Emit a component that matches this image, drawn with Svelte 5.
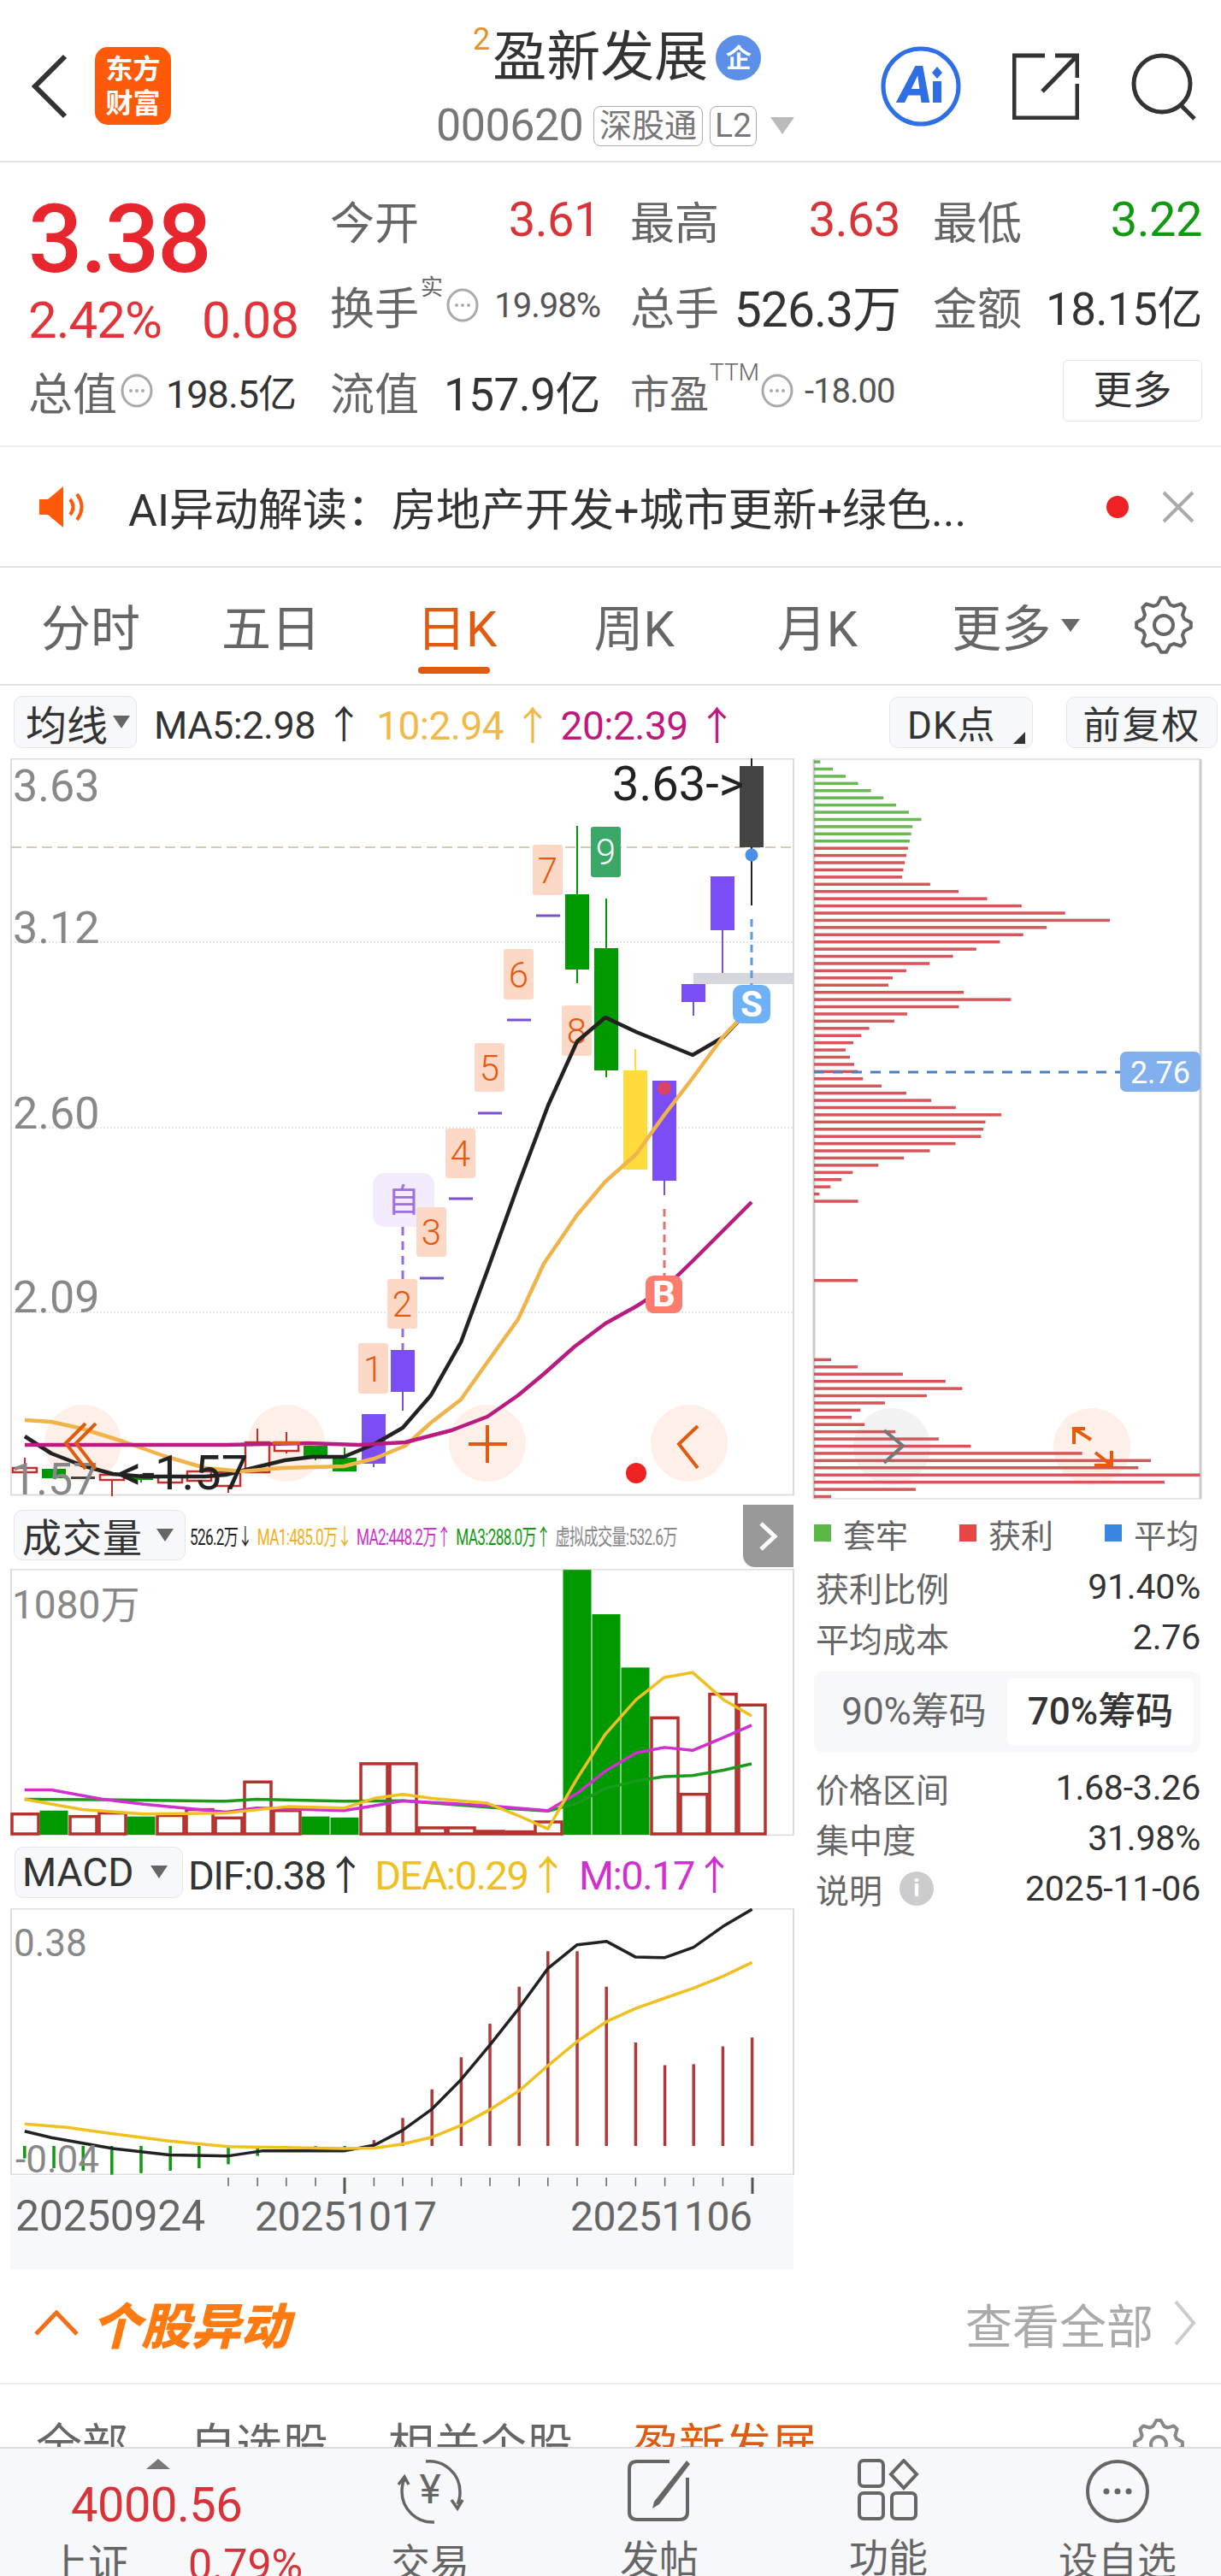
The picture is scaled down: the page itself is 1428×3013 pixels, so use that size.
<script>
  const X = 0.6;
  const z5 = (p) => p.map(([x, y]) => `${x * X},${1760 + y * 0.577}`).join(' ');

  const ma5 = '29,1680 60,1700 96,1714 132,1724 168,1727 204,1727 240,1727 264,1725 300,1716 333,1708 366,1704 402,1704 438,1689 471,1670 504,1632 539,1570 570,1486 606,1386 641,1293 675,1218 708,1190 744,1207 810,1234 846,1213 879,1178';
  const ma10 = '29,1661 60,1663 96,1671 144,1686 192,1703 240,1717 282,1721 330,1717 366,1716 402,1715 438,1706 474,1691 504,1664 539,1637 573,1589 606,1543 636,1478 675,1421 708,1382 744,1350 777,1304 810,1261 846,1212 879,1178';
  const ma20 = '29,1690 120,1690 264,1690 360,1688 420,1690 474,1687 528,1673 570,1657 606,1632 636,1607 672,1575 708,1548 744,1528 777,1507 810,1475 846,1439 879,1406';

  const candles = [
    { c: 879, t: 896, b: 991, wt: 887, wb: 1059, f: '#444', w: '#222' },
    { c: 845, t: 1025, b: 1088, wt: 1025, wb: 1138, f: '#7a4df5', w: '#7a4fd0' },
    { c: 811, t: 1151, b: 1172, wt: 1151, wb: 1188, f: '#7a4df5', w: '#7a4fd0' },
    { c: 777, t: 1264, b: 1381, wt: 1264, wb: 1398, f: '#7a4df5', w: '#7a4fd0' },
    { c: 743, t: 1252, b: 1368, wt: 1227, wb: 1368, f: '#ffdb3c', w: '#ffdb3c' },
    { c: 709, t: 1109, b: 1252, wt: 1051, wb: 1260, f: '#009900', w: '#009900' },
    { c: 675, t: 1046, b: 1134, wt: 966, wb: 1150, f: '#009900', w: '#009900' },
    { c: 471, t: 1579, b: 1628, wt: 1579, wb: 1650, f: '#7a4df5', w: '#7a4fd0' },
    { c: 437, t: 1654, b: 1712, wt: 1654, wb: 1716, f: '#7a4df5', w: '#7a4fd0' },
    { c: 403, t: 1705, b: 1721, wt: 1693, wb: 1721, f: '#009900', w: '#009900' },
    { c: 369, t: 1691, b: 1705, wt: 1691, wb: 1708, f: '#009900', w: '#009900' },
    { c: 63, t: 1718, b: 1729, wt: 1718, wb: 1729, f: '#009900', w: '#009900' },
    { c: 165, t: 1728, b: 1731, wt: 1724, wb: 1734, f: '#009900', w: '#009900' }
  ];
  const hollow = [
    { c: 335, t: 1687, b: 1697, wt: 1675, wb: 1700 },
    { c: 301, t: 1687, b: 1722, wt: 1671, wb: 1722 },
    { c: 267, t: 1722, b: 1738, wt: 1722, wb: 1746 },
    { c: 233, t: 1721, b: 1732, wt: 1721, wb: 1732 },
    { c: 199, t: 1727, b: 1734, wt: 1727, wb: 1742 },
    { c: 131, t: 1725, b: 1731, wt: 1725, wb: 1750 },
    { c: 29, t: 1717, b: 1722, wt: 1705, wb: 1722 }
  ];
  const tags = [
    { n: '1', x: 419, y: 1571, h: 59 },
    { n: '2', x: 453, y: 1496, h: 58 },
    { n: '4', x: 521, y: 1320, h: 58 },
    { n: '5', x: 555, y: 1220, h: 57 },
    { n: '6', x: 589, y: 1110, h: 59 },
    { n: '7', x: 623, y: 988, h: 59 },
    { n: '8', x: 657, y: 1176, h: 59 }
  ];
  const dashes = [[641, 1071], [607, 1193], [573, 1302], [539, 1402], [505, 1495]];

  const greens = [58, 102, 147, 191, 236, 280, 324, 369, 413, 382, 377, 372];
  const reds = [366, 360, 355, 350, 345, 444, 544, 644, 765, 918, 1075, 853, 771, 689, 606, 524, 442, 360, 312, 297, 562, 728, 545, 363, 318, 230, 202, 174, 147, 162, 177, 190, 208, 273, 360, 448, 534, 694, 638, 631, 623, 533, 443, 352, 262, 172, 133, 94, 55, 191];
  const lows = [96, 189, 348, 498, 557, 432, 285, 199, 168, 214, 322, 474, 587, 978, 1219, 1175, 1392, 1267, 393, 96];
  const rowY = (i) => 800 + 0.615 * (148 + 13.7 * i) - 1.7;
  const rowW = (x) => (x - 36) * 0.333;
  const bars = [
    ...greens.map((x, i) => ({ y: rowY(i), w: rowW(x), f: '#6ab853' })),
    ...reds.map((x, i) => ({ y: rowY(i + 12), w: rowW(x), f: '#d5555a' })),
    { y: rowY(72), w: rowW(189), f: '#d5555a' },
    ...lows.map((x, i) => ({ y: rowY(i + 83), w: rowW(x), f: '#d5555a' }))
  ];

  const centers = Array.from({ length: 26 }, (_, i) => 29 + i * 34);
  const vol = [
    [627, 0], [620, 1], [632, 0], [625, 0], [632, 1], [630, 0], [618, 0], [635, 0], [562, 0], [620, 0], [632, 1], [634, 1], [525, 0],
    [525, 0], [655, 0], [655, 0], [662, 0], [663, 0], [643, 0], [132, 1], [222, 1], [330, 1], [432, 0], [587, 0], [384, 0], [406, 0]
  ].map(([t, g], i) => ({ x: centers[i], y: 1760 + t * 0.577, g }));

  const volY = z5([[48, 597], [160, 618], [280, 627], [440, 625], [560, 612], [670, 615], [730, 595], [785, 587], [840, 595], [950, 605], [1010, 630], [1068, 657], [1125, 555], [1180, 465], [1240, 395], [1295, 350], [1350, 340], [1410, 395], [1465, 428]]);
  const volM = z5([[48, 578], [100, 578], [200, 597], [280, 607], [440, 623], [500, 615], [670, 620], [730, 610], [785, 600], [950, 610], [1068, 620], [1125, 585], [1180, 540], [1240, 503], [1295, 492], [1350, 498], [1410, 472], [1465, 447]]);
  const volG = z5([[48, 597], [200, 598], [440, 601], [500, 597], [670, 601], [785, 600], [950, 613], [1068, 621], [1125, 605], [1180, 575], [1240, 560], [1295, 551], [1350, 549], [1410, 538], [1465, 525]]);

  const macdUp = [[729, 1288], [785, 1243], [842, 1185], [899, 1120], [955, 1052], [1012, 977], [1068, 905], [1125, 905], [1182, 977], [1239, 1090], [1296, 1136], [1352, 1134], [1409, 1098], [1466, 1080]];
  const macdDown = [[48, 1325], [105, 1345], [162, 1350], [218, 1358], [275, 1355], [332, 1350], [388, 1345], [445, 1337], [502, 1320], [558, 1305], [615, 1303], [672, 1305]];
  const dif = z5([[48, 1270], [100, 1283], [220, 1305], [330, 1318], [445, 1320], [510, 1310], [670, 1310], [730, 1298], [785, 1268], [842, 1225], [899, 1165], [955, 1095], [1012, 1020], [1068, 940], [1125, 892], [1182, 885], [1239, 917], [1296, 918], [1352, 897], [1409, 855], [1466, 820]]);
  const dea = z5([[48, 1255], [130, 1262], [220, 1275], [330, 1290], [445, 1301], [670, 1305], [730, 1304], [785, 1296], [842, 1282], [899, 1258], [955, 1226], [1012, 1188], [1068, 1137], [1125, 1088], [1182, 1048], [1239, 1021], [1296, 1000], [1352, 980], [1409, 956], [1466, 928]]);
  const ticks = [445, 502, 558, 615, 729, 785, 842, 899, 955, 1012, 1068, 1125, 1182, 1239, 1296, 1352, 1409];

  const gear = (cx, cy, R, r, n) => {
    const pts = [];
    for (let i = 0; i < n * 4; i++) {
      const a = (i / (n * 4)) * Math.PI * 2 - Math.PI / 2 - Math.PI / (n * 4);
      const rad = i % 4 < 2 ? R : r;
      pts.push(`${(cx + rad * Math.cos(a)).toFixed(1)},${(cy + rad * Math.sin(a)).toFixed(1)}`);
    }
    return pts.join(' ');
  };
</script>

{#snippet more()}
  <svg class="more" viewBox="0 0 38 42" width="38" height="42">
    <ellipse cx="19" cy="21" rx="17" ry="18" fill="none" stroke="#aaa" stroke-width="3" />
    <circle cx="12" cy="21" r="2" fill="#aaa" /><circle cx="19" cy="21" r="2" fill="#aaa" /><circle cx="26" cy="21" r="2" fill="#aaa" />
  </svg>
{/snippet}

<div class="page">
  <header class="head">
    <div class="head-left">
      <svg width="44" height="76" viewBox="0 0 44 76"><path d="M40 3 5 38l35 35" fill="none" stroke="#333" stroke-width="6" /></svg>
      <div class="logo"><span>东方</span><span>财富</span></div>
    </div>
    <div class="head-mid">
      <div class="title"><sup>2</sup><b>盈新发展</b><i>企</i></div>
      <div class="sub"><span class="code">000620</span><em>深股通</em><em class="l2">L2</em><span class="tri"></span></div>
    </div>
    <div class="head-right">
      <svg width="96" height="96" viewBox="0 0 96 96">
        <circle cx="48" cy="48" r="44" fill="#fff" stroke="#2f6fe6" stroke-width="5" />
        <text class="ai" x="22" y="67">A</text><rect x="62" y="42" width="10" height="25" fill="#2f6fe6" />
        <path d="m67 25 6 7-6 7-6-7z" fill="#2f6fe6" />
      </svg>
      <svg width="78" height="78" viewBox="0 0 78 78"><path d="M76 36v40H2V3h36M35 45 74 5M50 3h26v26" fill="none" stroke="#333" stroke-width="5" /></svg>
      <svg width="80" height="80" viewBox="0 0 80 80"><circle cx="38" cy="37" r="33" fill="none" stroke="#333" stroke-width="5" /><path d="m60 62 16 16" stroke="#333" stroke-width="5" /></svg>
    </div>
  </header>

  <section class="quote">
    <div class="big">3.38</div>
    <div class="cell"><span class="k">今开</span><span class="v up">3.61</span></div>
    <div class="cell"><span class="k">最高</span><span class="v up">3.63</span></div>
    <div class="cell last"><span class="k">最低</span><span class="v down">3.22</span></div>

    <div class="chg"><span>2.42%</span><span>0.08</span></div>
    <div class="cell"><span class="k">换手</span><span class="s">实</span>{@render more()}<span class="v small">19.98%</span></div>
    <div class="cell"><span class="k">总手</span><span class="v dark wide">526.3万</span></div>
    <div class="cell last"><span class="k">金额</span><span class="v dark">18.15亿</span></div>

    <div class="cell first"><span class="k">总值</span>{@render more()}<span class="v mid">198.5亿</span></div>
    <div class="cell"><span class="k">流值</span><span class="v dark">157.9亿</span></div>
    <div class="cell left"><span class="k k2">市盈</span><span class="s ttm">TTM</span>{@render more()}<span class="v small dark">-18.00</span></div>
    <div class="cell last end"><span class="btn-more">更多</span></div>
  </section>

  <section class="notice">
    <svg width="58" height="50" viewBox="0 0 58 50">
      <path d="M1 16h10L29 1v48L11 34H1z" fill="#ff5a0a" /><path d="M37 16q7 9 0 18M45 10q11 15 0 30" fill="none" stroke="#ff5a0a" stroke-width="4" />
    </svg>
    <span class="notice-t">AI异动解读：房地产开发+城市更新+绿色...</span>
    <span class="dot"></span>
    <svg width="38" height="38" viewBox="0 0 38 38"><path d="m2 2 34 34M36 2 2 36" stroke="#aaa" stroke-width="4" /></svg>
  </section>

  <nav class="tabs">
    <span class="t1">分时</span><span class="t2">五日</span><span class="t3 on">日K</span><span class="t4">周K</span><span class="t5">月K</span>
    <span class="t6">更多<i></i></span>
    <svg width="70" height="70" viewBox="0 0 70 70"><polygon points={gear(35, 35, 32, 25, 8)} fill="none" stroke="#666" stroke-width="4" stroke-linejoin="round" /><circle cx="35" cy="35" r="11" fill="none" stroke="#666" stroke-width="4" /></svg>
  </nav>

  <div class="board">
    <div class="charts">
      <div class="tool">
        <span class="pick p1">均线<i></i></span>
        <span class="ma">MA5:2.98 ↑</span><span class="ma c1">10:2.94 ↑</span><span class="ma c2">20:2.39 ↑</span>
      </div>

      <svg class="kline" viewBox="0 887 940 868" width="940" height="868">
        <rect x="13" y="887.500" width="915" height="861" fill="#fff" stroke="#ddd" stroke-width="2" />
        <line x1="13" x2="925" y1="991" y2="991" stroke="#d3cbb4" stroke-width="2" stroke-dasharray="12 6" />
        {#each [1102, 1319, 1535] as y}<line x1="13" x2="928" y1={y} y2={y} stroke="#e0e0e0" stroke-width="1.500" stroke-dasharray="2 2" />{/each}
        <text class="axis" x="15" y="937">3.63</text>
        <text class="axis" x="15" y="1103">3.12</text>
        <text class="axis" x="15" y="1320">2.60</text>
        <text class="axis" x="15" y="1535">2.09</text>
        <rect x="811" y="1138" width="117" height="13" fill="#d5d7dc" />

        {#each [97, 335, 570, 806] as cx}<circle {cx} cy="1688" r="45" fill="#fef0e8" />{/each}

        {#each candles as k}
          <line x1={k.c} x2={k.c} y1={k.wt} y2={k.wb} stroke={k.w} stroke-width="2" />
          <rect x={k.c - 14} y={k.t} width="28" height={k.b - k.t} fill={k.f} />
        {/each}
        {#each hollow as k}
          <line x1={k.c} x2={k.c} y1={k.wt} y2={k.wb} stroke="#c0302e" stroke-width="2" />
          <rect x={k.c - 14} y={k.t} width="28" height={k.b - k.t} fill="#fff" stroke="#c0302e" stroke-width="2.500" />
        {/each}
        <rect x="83" y="1727" width="28" height="3" fill="#444" />
        {#each dashes as d}<line x1={d[0] - 14} x2={d[0] + 14} y1={d[1]} y2={d[1]} stroke="#7a4fd0" stroke-width="3" />{/each}

        <line x1="471" x2="471" y1="1435" y2="1579" stroke="#9a6be0" stroke-width="3" stroke-dasharray="10 7" />
        <line x1="777" x2="777" y1="1414" y2="1492" stroke="#d9756a" stroke-width="3" stroke-dasharray="9 6" />
        <line x1="879" x2="879" y1="1075" y2="1152" stroke="#5a9be8" stroke-width="3" stroke-dasharray="9 6" />
        <circle cx="879" cy="1000" r="7.500" fill="#4a8fe8" />
        <circle cx="777" cy="1273" r="8" fill="#d9436a" />

        {#each tags as g}
          <rect x={g.x} y={g.y} width="35" height={g.h} rx="3" fill="#fcd9c6" />
          <text class="tagn" x={g.x + 17.500} y={g.y + g.h / 2 + 15}>{g.n}</text>
        {/each}
        <rect x="691" y="967" width="35" height="59" rx="3" fill="#3aa866" />
        <text class="tagn w" x="708.500" y="1011">9</text>

        <rect x="436" y="1372" width="72" height="63" rx="14" fill="#f3ecfd" />
        <text class="zi" x="472" y="1417">自</text>
        <rect x="487" y="1412" width="35" height="58" rx="3" fill="#fcd9c6" />
        <text class="tagn" x="504.500" y="1456">3</text>

        <polyline class="ln" points={ma5} stroke="#222" />
        <polyline class="ln" points={ma10} stroke="#f0b44a" />
        <polyline class="ln" points={ma20} stroke="#b81c80" />

        <rect x="755" y="1492" width="43" height="44" rx="9" fill="#ff7b6b" />
        <text class="bs" x="776.500" y="1528">B</text>
        <rect x="857" y="1152" width="44" height="45" rx="10" fill="#6fb1f7" />
        <text class="bs" x="879" y="1189">S</text>

        <text class="axis" x="13" y="1748">1.57</text>
        <text class="mark" x="716" y="936">3.63-&gt;</text>
        <text class="mark" x="137" y="1742">&lt;-1.57</text>

        <path d="M112 1665 89 1688l23 30M100 1665 77 1688l23 30" fill="none" stroke="#e05a10" stroke-width="4" />
        <path d="M319 1688h32" stroke="#e05a10" stroke-width="4" />
        <path d="M548 1689h45M570 1667v44" stroke="#e05a10" stroke-width="4" />
        <path d="M816 1668 794 1689l22 28" fill="none" stroke="#e05a10" stroke-width="4" />
        <circle cx="744" cy="1723" r="12" fill="#ee2222" />
      </svg>

      <div class="tool tool2">
        <span class="pick p2">成交量<i></i></span>
        <div class="tinyrow">
          <span class="tiny">526.2万↓</span><span class="tiny c3">MA1:485.0万↓</span><span class="tiny c4">MA2:448.2万↑</span><span class="tiny c5">MA3:288.0万↑</span><span class="tiny c6">虚拟成交量:532.6万</span>
        </div>
        <span class="nextbtn"><svg width="24" height="36" viewBox="0 0 24 36"><path d="m3 3 16 15L3 33" fill="none" stroke="#fff" stroke-width="5" /></svg></span>
      </div>

      <svg class="vol" viewBox="0 1835 940 312" width="940" height="312">
        <rect x="13" y="1835.500" width="915" height="311" fill="#fff" stroke="#ddd" stroke-width="2" />
        <text class="axis vaxis" x="14" y="1893">1080万</text>
        {#each vol as v}
          {#if v.g}
            <rect x={v.x - 16.500} y={v.y} width="33" height={2146 - v.y} fill="#009900" />
          {:else}
            <rect x={v.x - 15} y={v.y} width="31" height={2145 - v.y} fill="#fff" stroke="#b8302e" stroke-width="3.500" />
          {/if}
        {/each}
        <polyline class="ln thin" points={volG} stroke="#1a9a1a" />
        <polyline class="ln thin" points={volM} stroke="#d030d0" />
        <polyline class="ln thin" points={volY} stroke="#efc020" />
      </svg>

      <div class="tool tool3">
        <span class="pick p3">MACD<i></i></span>
        <span class="ma m0">DIF:0.38<i class="ar">↑</i></span><span class="ma m1">DEA:0.29<i class="ar">↑</i></span><span class="ma m2">M:0.17<i class="ar">↑</i></span>
      </div>

      <svg class="macd" viewBox="0 2232 940 312" width="940" height="312">
        <rect x="13" y="2232.500" width="915" height="311" fill="#fff" stroke="#ddd" stroke-width="2" />
        <text class="axis small" x="16" y="2288">0.38</text>
        {#each macdUp as m}<line x1={m[0] * X} x2={m[0] * X} y1={1760 + m[1] * 0.577} y2="2510" stroke="#b03a3a" stroke-width="3.500" />{/each}
        {#each macdDown as m}<line x1={m[0] * X} x2={m[0] * X} y1="2510" y2={1760 + m[1] * 0.577} stroke="#129912" stroke-width="3.500" />{/each}
        <polyline class="ln thin" points={dif} stroke="#222" />
        <polyline class="ln thin" points={dea} stroke="#efc020" />
        <text class="axis small" x="18" y="2541">-0.04</text>
      </svg>

      <div class="dates">
        <svg viewBox="0 2544 940 109" width="940" height="109">
          {#each ticks as t}<line x1={t * X} x2={t * X} y1="2546" y2="2556" stroke="#666" stroke-width="1.500" />{/each}
          <line x1="403" x2="403" y1="2546" y2="2565" stroke="#555" stroke-width="3" />
          <line x1="880" x2="880" y1="2546" y2="2565" stroke="#555" stroke-width="3" />
          <text class="date" x="18" y="2608">20250924</text>
          <text class="date d2" x="298" y="2608">20251017</text>
          <text class="date d2" x="667" y="2608">20251106</text>
        </svg>
      </div>
    </div>

    <aside class="side">
      <div class="tool side-tool">
        <span class="pick p4">DK点<u></u></span>
        <span class="pick p5">前复权</span>
      </div>
      <svg class="chips" viewBox="940 887 488 873" width="488" height="873">
        <rect x="952" y="888" width="452" height="865" fill="#fff" stroke="#ddd" stroke-width="1.500" />
        <line x1="952" x2="952" y1="888" y2="1753" stroke="#ccc" stroke-width="3" />
        <line x1="1404" x2="1404" y1="888" y2="1753" stroke="#ccc" stroke-width="3" />
        <circle cx="1043" cy="1692" r="45" fill="#f2f2f2" />
        <circle cx="1277" cy="1692" r="45" fill="#fef0e8" />
        {#each bars as b}<rect x="952" y={b.y} width={b.w} height="3.500" fill={b.f} />{/each}
        <line x1="952" x2="1312" y1="1254" y2="1254" stroke="#4a80c0" stroke-width="3" stroke-dasharray="12 10" />
        <rect x="1310" y="1230" width="94" height="47" rx="7" fill="#80b0ee" />
        <text class="avg" x="1357" y="1267">2.76</text>
        <path d="M1034 1673 1056 1691 1034 1711" fill="none" stroke="#777" stroke-width="4" />
        <path d="M1256 1689v-18h13M1256 1671l20 13M1280 1714h20v-17M1300 1714l-19-15" fill="none" stroke="#e8590c" stroke-width="4" />
      </svg>
      <div class="legend">
        <span><i class="g"></i>套牢</span><span><i class="r"></i>获利</span><span><i class="b"></i>平均</span>
      </div>
      <div class="row"><span>获利比例</span><b>91.40%</b></div>
      <div class="row"><span>平均成本</span><b>2.76</b></div>
      <div class="seg"><span>90%筹码</span><span class="act">70%筹码</span></div>
      <div class="row"><span>价格区间</span><b>1.68-3.26</b></div>
      <div class="row"><span>集中度</span><b>31.98%</b></div>
      <div class="row"><span class="info-k">说明<i>i</i></span><b>2025-11-06</b></div>
    </aside>
  </div>

  <section class="moves">
    <svg width="52" height="30" viewBox="0 0 52 30"><path d="m2 28 24-25 24 25" fill="none" stroke="#f0701a" stroke-width="5" /></svg>
    <span class="moves-t">个股异动</span>
    <span class="all">查看全部</span>
    <svg width="28" height="56" viewBox="0 0 28 56"><path d="m3 3 21 25L3 53" fill="none" stroke="#ccc" stroke-width="4" /></svg>
  </section>

  <section class="cuts">
    <span class="c-a">全部</span><span class="c-b">自选股</span><span class="c-c">相关个股</span><span class="c-d">盈新发展</span>
    <svg width="60" height="60" viewBox="0 0 60 60"><polygon points={gear(30, 30, 28, 22, 8)} fill="none" stroke="#888" stroke-width="4" stroke-linejoin="round" /><circle cx="30" cy="30" r="9" fill="none" stroke="#888" stroke-width="4" /></svg>
  </section>

  <footer class="foot">
    <div class="idx">
      <i class="up-tri"></i>
      <div class="idx-v">4000.56</div>
      <div class="idx-b"><span>上证</span><em>0.79%</em></div>
    </div>
    <div class="fi">
      <svg width="90" height="78" viewBox="0 0 90 78">
        <path d="M40 3a36 36 0 0 1 40 36c0 6-1 10-3 14M50 74a36 36 0 0 1-38-36c0-6 1-10 3-14" fill="none" stroke="#666" stroke-width="3.500" />
        <path d="m8 30 7-9 5 9M70 48l7 10 6-10" fill="none" stroke="#666" stroke-width="3.500" />
        <text class="yen" x="45" y="52">¥</text>
      </svg>
      <span>交易</span>
    </div>
    <div class="fi">
      <svg width="76" height="74" viewBox="0 0 76 74">
        <path d="M50 3H12Q3 3 3 12v50q0 9 9 9h50q9 0 9-9V22" fill="none" stroke="#666" stroke-width="4" />
        <path d="M70 2 32 50 30 58l8-5L74 6z" fill="#666" />
      </svg>
      <span>发帖</span>
    </div>
    <div class="fi">
      <svg width="72" height="72" viewBox="0 0 72 72" fill="none" stroke="#666" stroke-width="4">
        <rect x="2" y="2" width="28" height="30" rx="5" /><path d="m54 2 15 16-15 16-15-16z" /><rect x="2" y="40" width="28" height="30" rx="5" /><rect x="40" y="40" width="28" height="30" rx="5" />
      </svg>
      <span>功能</span>
    </div>
    <div class="fi">
      <svg width="76" height="76" viewBox="0 0 76 76">
        <circle cx="38" cy="38" r="35" fill="none" stroke="#666" stroke-width="4" />
        <circle cx="25" cy="38" r="3.500" fill="#666" /><circle cx="38" cy="38" r="3.500" fill="#666" /><circle cx="51" cy="38" r="3.500" fill="#666" />
      </svg>
      <span>设自选</span>
    </div>
  </footer>
</div>

<style>
  :global(body) { margin: 0; background: #fff; }
  .page {
    width: 1428px; height: 3013px; overflow: hidden; background: #fff;
    font-family: Roboto, "Noto Sans CJK SC", sans-serif; color: #333;
    display: flex; flex-direction: column;
  }
  svg { display: block; flex: none; }
  i, em, u { font-style: normal; text-decoration: none; }

  .head { height: 190px; flex: none; box-sizing: border-box; border-bottom: 2px solid #e2e2e2; display: flex; position: relative; }
  .head-left { width: 510px; padding: 55px 0 0 36px; box-sizing: border-box; display: flex; align-items: center; align-self: flex-start; gap: 31px; }
  .logo { width: 89px; height: 91px; background: #ff5a0a; border-radius: 15px; color: #fff; display: flex; flex-direction: column; align-items: center; justify-content: center; font-size: 32px; font-weight: 700; line-height: 40px; }
  .head-mid { width: 480px; flex: none; padding-top: 30px; }
  .title { height: 74px; display: flex; align-items: center; padding-left: 43px; }
  .title sup { font-size: 36px; color: #e8902a; line-height: 40px; align-self: flex-start; margin: -4px 3px 0 0; }
  .title b { font-size: 63px; font-weight: 400; line-height: 74px; color: #333; }
  .title i { width: 53px; height: 53px; border-radius: 50%; background: #5b8fe8; color: #fff; font-size: 30px; font-weight: 700; text-align: center; line-height: 53px; margin-left: 9px; }
  .sub { height: 50px; margin-top: 18px; display: flex; align-items: center; gap: 8px; }
  .code { font-size: 52px; color: #777; line-height: 50px; width: 176px; letter-spacing: -.5px; }
  .sub em { border: 1.5px solid #aaa; border-radius: 8px; font-size: 38px; line-height: 44px; height: 45px; padding: 0 6px; color: #777; white-space: nowrap; }
  .sub .l2 { padding: 0 5px; font-size: 39px; }
  .tri { width: 0; height: 0; border-left: 14px solid transparent; border-right: 14px solid transparent; border-top: 20px solid #bbb; margin-left: 8px; }
  .head-right { margin-left: 39px; padding-top: 53px; display: flex; align-items: center; align-self: flex-start; gap: 59px; }
  .ai { font: italic 800 60px Roboto, sans-serif; fill: #2f6fe6; }

  .quote { height: 333px; flex: none; box-sizing: border-box; padding: 17px 0 0 33px; border-bottom: 2px solid #eee; display: grid; grid-template-columns: 353px 351px 354px 315px; grid-template-rows: 100px 100px 100px; }
  .big { font-size: 112px; font-weight: 500; line-height: 100px; color: #e8262d; margin-top: 23px; letter-spacing: -2.5px; }
  .chg { display: flex; gap: 47px; font-size: 60px; color: #e2333a; padding-top: 33px; line-height: 70px; letter-spacing: -1px; white-space: nowrap; }
  .cell { width: 316px; display: flex; align-items: center; justify-content: space-between; height: 100px; }
  .cell.last { width: 315px; }
  .cell.first { width: 317px; justify-content: flex-start; }
  .cell.left { justify-content: flex-start; }
  .cell.end { justify-content: flex-end; }
  .k { font-size: 52px; color: #666; white-space: nowrap; }
  .k2 { font-size: 46px; }
  .v { font-size: 56px; white-space: nowrap; letter-spacing: -.5px; }
  .v.up { color: #d9333a; }
  .v.down { color: #129912; }
  .v.dark { color: #333; font-size: 53px; }
  .v.wide { font-size: 57px; letter-spacing: -1px; }
  .v.small { font-size: 40px; color: #555; letter-spacing: -1px; margin-left: auto; }
  .v.small.dark { margin-left: 13px; font-size: 40px; }
  .v.mid { font-size: 45px; color: #333; margin-left: 15px; letter-spacing: -1px; }
  .cell.first .more { margin-left: 4px; }
  .s { font-size: 26px; color: #666; align-self: flex-start; margin: 8px 4px 0 2px; }
  .s.ttm { font-size: 28px; margin: 12px 2px 0 1px; font-weight: 300; letter-spacing: 0; }
  .btn-more { border: 1.5px solid #e4e4e4; border-radius: 6px; width: 163px; height: 72px; box-sizing: border-box; font-size: 46px; line-height: 68px; text-align: center; color: #333; }

  .notice { height: 141px; flex: none; box-sizing: border-box; border-bottom: 2px solid #e2e2e2; display: flex; align-items: center; padding-left: 45px; }
  .notice-t { font-size: 52px; color: #333; margin-left: 47px; width: 1144px; white-space: nowrap; }
  .dot { width: 26px; height: 26px; border-radius: 50%; background: #ee2222; margin-right: 39px; }

  .tabs { height: 138px; flex: none; box-sizing: border-box; border-bottom: 2px solid #e2e2e2; display: flex; align-items: center; font-size: 58px; color: #666; padding-bottom: 2px; }
  .tabs span { white-space: nowrap; }
  .t1 { margin-left: 48px; }
  .t2 { margin-left: 95px; }
  .t3 { margin-left: 112px; }
  .t4 { margin-left: 113px; }
  .t5 { margin-left: 120px; }
  .t6 { margin-left: 110px; display: flex; align-items: center; }
  .tabs svg { margin-left: 63px; }
  .t6 i { width: 0; height: 0; border-left: 11px solid transparent; border-right: 11px solid transparent; border-top: 15px solid #666; margin-left: 12px; }
  .on { color: #e05a10; position: relative; }
  .on::after { content: ""; position: absolute; left: 2px; right: 8px; bottom: -15px; height: 8px; border-radius: 4px; background: #e05a10; }

  .board { display: flex; flex: none; height: 1851px; }
  .charts { width: 940px; flex: none; }
  .side { width: 488px; flex: none; }
  .tool { height: 85px; display: flex; align-items: center; box-sizing: border-box; white-space: nowrap; }
  .pick { display: flex; align-items: center; box-sizing: border-box; background: #f7f8fa; border: 1.5px solid #e4e6ea; border-radius: 10px; color: #333; flex: none; }
  .pick i { width: 0; height: 0; border-left: 10px solid transparent; border-right: 10px solid transparent; border-top: 15px solid #666; }
  .p1 { width: 144px; height: 61px; margin-left: 16px; font-size: 48px; padding-left: 13px; gap: 6px; }
  .ma { font-size: 45px; color: #333; letter-spacing: -.5px; }
  .p1 + .ma { margin-left: 20px; }
  .c1 { color: #f0b94a; margin-left: 16px; font-size: 46px; }
  .c2 { color: #c0187d; margin-left: 10px; font-size: 46px; }
  .tool2 { height: 80px; position: relative; }
  .p2 { width: 201px; height: 59px; margin-left: 16px; font-size: 46px; padding-left: 9px; gap: 16px; letter-spacing: 1px; }
  .tinyrow { display: flex; align-items: center; gap: 9px; margin-left: 5px; transform: scaleX(.66); transform-origin: left center; }
  .tiny { font-size: 26px; color: #222; letter-spacing: -1px; }
  .c3 { color: #f0b020; }
  .c4 { color: #d030d0; }
  .c5 { color: #129912; }
  .c6 { color: #888; }
  .nextbtn { position: absolute; right: 12px; top: 5px; width: 59px; height: 73px; background: #999; border-radius: 0 0 0 14px; display: flex; align-items: center; justify-content: center; }
  .tool3 { height: 85px; }
  .p3 { width: 197px; height: 60px; margin-left: 17px; font-size: 46px; padding-left: 8px; gap: 20px; }
  .tool3 .ma { font-size: 47px; letter-spacing: -1.5px; }
  .ar { display: inline-block; margin: 0 -12px 0 0; }
  .m0 { margin-left: 6px; }
  .tool3 .m1 { color: #efc020; margin-left: 24px; }
  .tool3 .m2 { color: #d030d0; margin-left: 26px; }
  .dates { height: 109px; background: #f7f8fa; margin: 1px 12px 0; overflow: hidden; }
  .dates svg { margin-left: -12px; }

  .axis { font-size: 52px; fill: #888; font-family: Roboto, "Noto Sans CJK SC", sans-serif; }
  .axis.vaxis { font-size: 46px; }
  .axis.small { font-size: 44px; }
  .mark { font-size: 56px; fill: #222; font-family: Roboto, sans-serif; }
  .tagn { font-size: 42px; fill: #e55a10; text-anchor: middle; font-weight: 300; font-family: Roboto, sans-serif; }
  .tagn.w { fill: #fff; }
  .zi { font-size: 38px; fill: #a070e0; text-anchor: middle; font-family: "Noto Sans CJK SC", sans-serif; }
  .bs { font-size: 42px; fill: #fff; text-anchor: middle; font-weight: 700; font-family: Roboto, sans-serif; }
  .ln { fill: none; stroke-width: 4.5; stroke-linejoin: round; }
  .ln.thin { stroke-width: 3.5; }
  .date { font-size: 50px; fill: #666; font-family: Roboto, sans-serif; letter-spacing: -.4px; }
  .date.d2 { font-size: 48px; }
  .avg { font-size: 36px; fill: #fff; text-anchor: middle; font-family: Roboto, sans-serif; }

  .side-tool { padding-left: 100px; gap: 39px; }
  .p4 { width: 168px; height: 60px; font-size: 44px; padding-left: 20px; position: relative; letter-spacing: 1px; }
  .p4 u { position: absolute; right: 8px; bottom: 4px; width: 0; height: 0; border-left: 14px solid transparent; border-bottom: 14px solid #333; }
  .p5 { width: 177px; height: 60px; font-size: 44px; justify-content: center; letter-spacing: 2px; }
  .legend { height: 66px; display: flex; align-items: center; padding-left: 12px; font-size: 38px; color: #666; }
  .legend span { display: flex; align-items: center; width: 170px; flex: none; gap: 14px; }
  .legend i { width: 20px; height: 20px; }
  .legend .g { background: #5ab946; }
  .legend .r { background: #e84545; }
  .legend .b { background: #3a85e0; }
  .row { height: 59px; display: flex; align-items: center; justify-content: space-between; margin: 0 24px 0 14px; font-size: 39px; color: #666; }
  .row b { font-size: 41px; font-weight: 400; color: #333; letter-spacing: -.2px; }
  .info-k { display: flex; align-items: center; gap: 20px; }
  .info-k i { width: 40px; height: 40px; border-radius: 50%; background: #ccc; color: #fff; font-size: 28px; font-weight: 700; line-height: 40px; text-align: center; }
  .seg { margin: 11px 24px 11px 12px; height: 95px; box-sizing: border-box; padding: 8px; background: #f7f8fa; border-radius: 10px; display: grid; grid-template-columns: 218px 218px; justify-content: space-between; font-size: 44px; color: #666; text-align: center; }
  .seg span { line-height: 79px; }
  .seg .act { background: #fff; border-radius: 8px; color: #333; font-weight: 500; }

  .moves { height: 136px; flex: none; box-sizing: border-box; border-bottom: 2px solid #eee; display: flex; align-items: center; padding: 0 28px 6px 40px; }
  .moves-t { font-size: 58px; font-weight: 900; font-style: italic; color: #ff7a10; margin-left: 15px; }
  .all { font-size: 55px; color: #aaa; margin-left: auto; margin-right: 23px; }
  .cuts { height: 73px; flex: none; display: flex; align-items: flex-start; font-size: 54px; line-height: 66px; color: #666; padding: 40px 0 0 42px; overflow: hidden; box-sizing: border-box; }
  .c-b { margin-left: 72px; }
  .c-c { margin-left: 70px; }
  .c-d { margin-left: 70px; color: #e05a10; }
  .cuts svg { margin-left: auto; margin-right: 43px; }

  .foot { flex: 1; background: #f7f8fa; border-top: 2px solid #ddd; display: flex; position: relative; min-height: 0; overflow: hidden; }
  .idx { width: 368px; flex: none; box-sizing: border-box; padding-top: 12px; }
  .up-tri { display: block; width: 0; height: 0; margin-left: 171px; border-left: 14px solid transparent; border-right: 14px solid transparent; border-bottom: 12px solid #777; }
  .idx-v { font-size: 56px; color: #d9333a; margin: 11px 0 0 83px; line-height: 62px; letter-spacing: -.5px; }
  .idx-b { display: flex; margin: 6px 0 0 55px; font-size: 48px; color: #666; line-height: 66px; white-space: nowrap; }
  .idx-b em { color: #d9333a; margin-left: 69px; font-size: 50px; }
  .fi { display: flex; flex-direction: column; align-items: center; width: 270px; flex: none; padding-top: 12px; font-size: 46px; color: #666; gap: 14px; line-height: 60px; white-space: nowrap; margin-right: -2px; }
  .yen { font-size: 48px; fill: #666; text-anchor: middle; font-family: Roboto, sans-serif; }
</style>
